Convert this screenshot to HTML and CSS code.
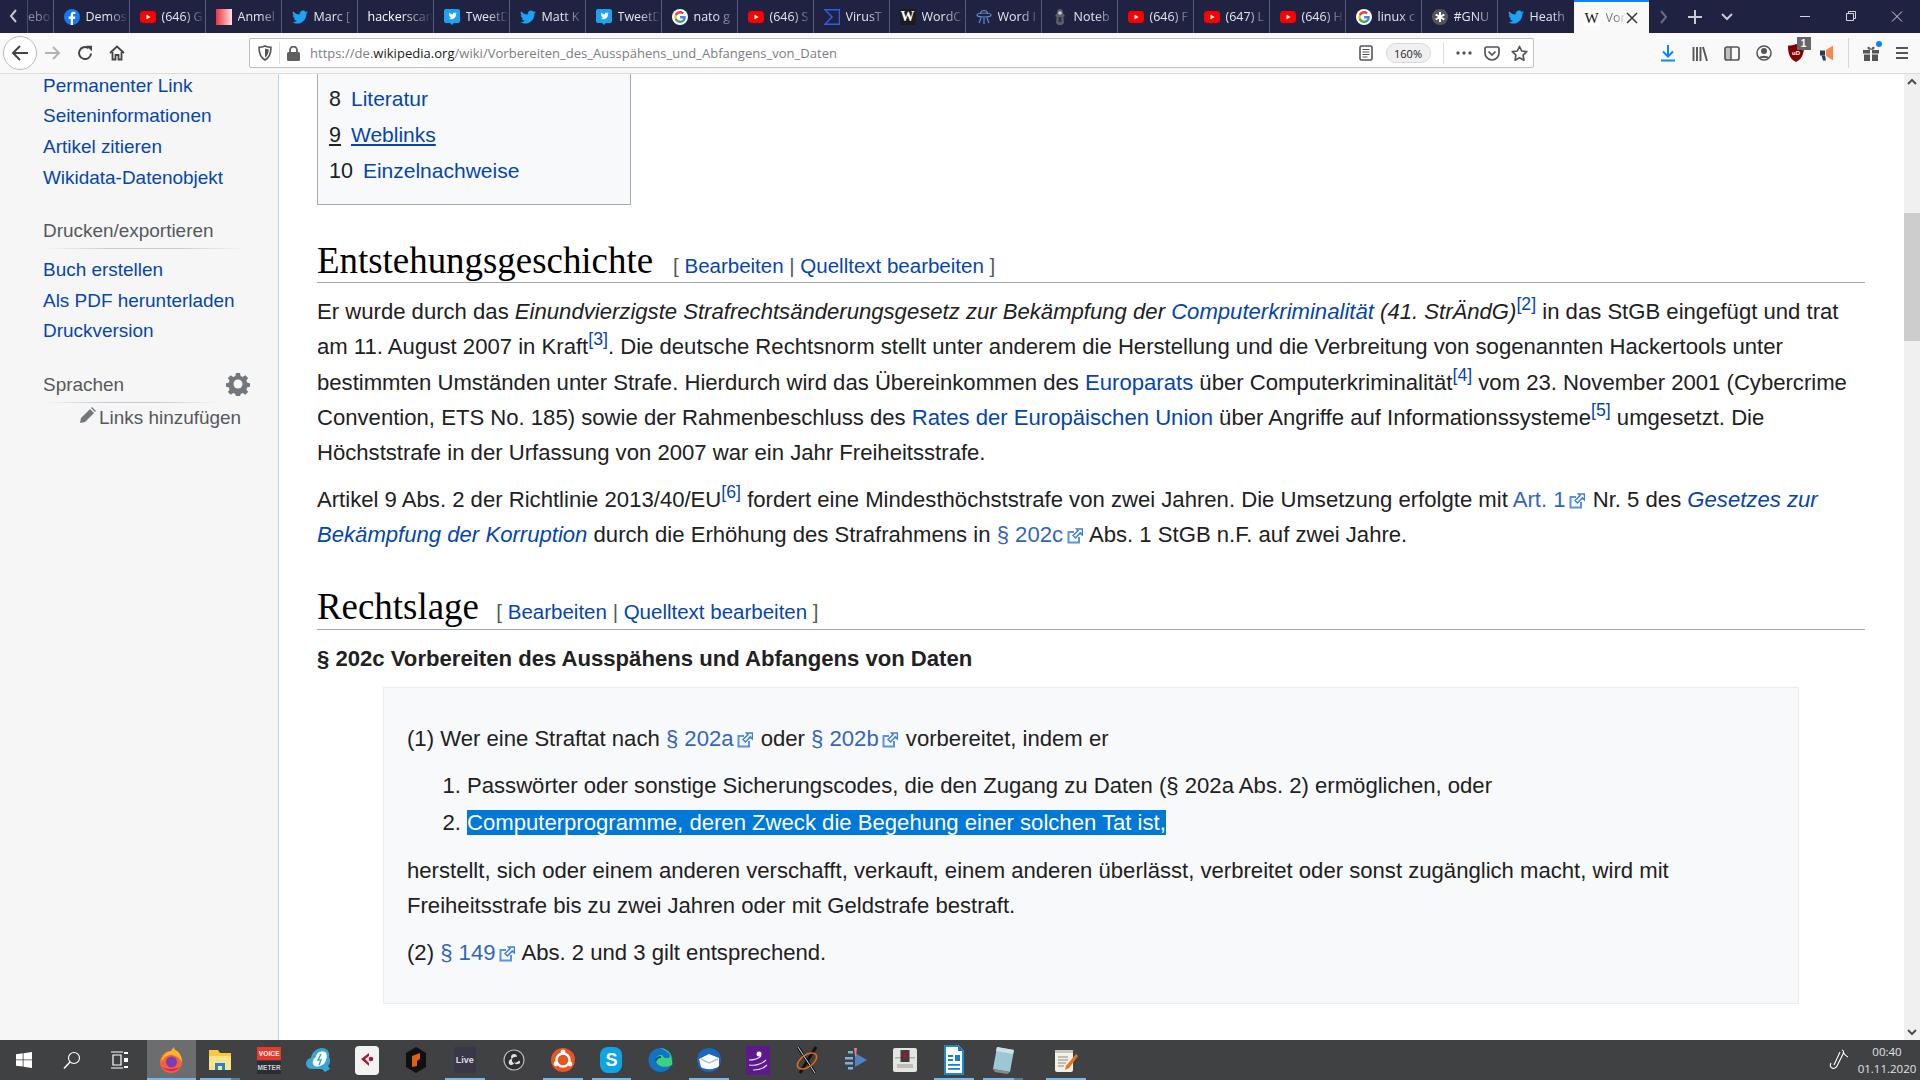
FILE: index.html
```html
<!DOCTYPE html>
<html lang="de">
<head>
<meta charset="utf-8">
<title>Vorbereiten des Ausspähens und Abfangens von Daten</title>
<link rel="stylesheet" href="styles.css">
</head>
<body>
<svg class="defs" width="0" height="0">
  <symbol id="yt" viewBox="0 0 16 16"><rect x="0" y="2" width="16" height="12" rx="3.5" fill="#f00"/><path d="M6.5 5.5v5l4-2.5z" fill="#fff"/></symbol>
  <symbol id="tw" viewBox="0 0 16 16"><path d="M16 3.2c-.6.3-1.2.4-1.9.5.7-.4 1.2-1 1.4-1.8-.6.4-1.3.6-2.1.8C12.800 2 12 1.600 11 1.600c-1.800 0-3.300 1.500-3.300 3.300 0 .3 0 .5.100.7C5.100 5.500 2.700 4.200 1.100 2.200.8 2.700.7 3.200.7 3.800c0 1.100.6 2.100 1.500 2.700-.5 0-1-.2-1.500-.4 0 1.600 1.100 2.900 2.600 3.200-.5.100-1 .2-1.500.100.4 1.300 1.600 2.300 3.100 2.300C3.800 12.700 2 13.300 0 13.100c1.500.9 3.200 1.500 5 1.500 6 0 9.400-5 9.400-9.400v-.4c.6-.5 1.200-1.100 1.600-1.600z" fill="#1da1f2"/></symbol>
  <symbol id="td" viewBox="0 0 16 16"><rect x="0" y="0" width="16" height="14" rx="2" fill="#1da1f2"/><path d="M6 14l2 2 2-2z" fill="#1da1f2"/><path d="M12.500 4.300c-.4.2-.7.300-1.100.3.400-.2.700-.6.800-1-.4.200-.7.400-1.200.4-.7-.7-2.500-.4-2.300 1.400-1.500 0-2.700-.8-3.500-1.800-.5.900 0 1.900.6 2.300-.3 0-.6-.1-.8-.2 0 .9.600 1.600 1.400 1.800-.3.100-.5.100-.8 0 .2.700.9 1.200 1.700 1.300-.7.500-1.500.8-2.500.7 3.500 2 7.100-.4 7.100-4.100.3-.2.500-.5.600-.9z" fill="#fff"/></symbol>
  <symbol id="gg" viewBox="0 0 16 16"><circle cx="8" cy="8" r="8" fill="#fff"/><path d="M13.800 8.200c0-.5 0-.9-.1-1.300H8.100v2.500h3.200c-.1.700-.5 1.300-1.200 1.700v1.500h1.900c1.100-1 1.800-2.600 1.800-4.400z" fill="#4285f4"/><path d="M8.100 14c1.600 0 2.900-.5 3.900-1.400l-1.900-1.500c-.5.400-1.200.6-2 .6-1.500 0-2.800-1-3.300-2.400H2.900v1.500C3.900 12.700 5.800 14 8.100 14z" fill="#34a853"/><path d="M4.800 9.300c-.3-.8-.3-1.700 0-2.500V5.300H2.900c-.8 1.500-.8 3.400 0 5z" fill="#fbbc05"/><path d="M8.100 4.400c.9 0 1.600.3 2.200.9L12 3.600C10.900 2.600 9.600 2 8.100 2 5.800 2 3.900 3.300 2.900 5.300l1.900 1.500c.5-1.400 1.800-2.400 3.300-2.400z" fill="#ea4335"/></symbol>
  <symbol id="ext" viewBox="0 0 16 16"><path d="M7 4H1.500v10.500H12V9" fill="none" stroke="#5b93dc" stroke-width="2"/><path d="M9.500 1H15.500V7L13.300 4.900 8.500 10 6 7.500 11 2.800z" fill="none" stroke="#3f7fd6" stroke-width="1.500"/></symbol>
</svg>

<header class="tabbar">
  <svg class="tabscroll" width="27" height="33" viewBox="0 0 27 33"><path d="M16 10l-5 6 5 6" fill="none" stroke="#c4c5cf" stroke-width="2"/></svg>
  <div class="tab tab-first"><span class="tt">ebo</span></div>
  <div class="tab"><svg class="ti" viewBox="0 0 16 16"><circle cx="8" cy="8" r="8" fill="#1877f2"/><path d="M9 16v-6h2l.4-2.400H9V6.200c0-.8.300-1.200 1.300-1.200h1.100V3c-.5-.1-1.200-.2-1.900-.2C8 2.800 6.700 4 6.700 6v1.600H4.600V10h2.100v6z" fill="#fff"/></svg><span class="tt">Demos</span></div>
  <div class="tab"><svg class="ti"><use href="#yt"/></svg><span class="tt">(646) G</span></div>
  <div class="tab"><span class="ti anmel"></span><span class="tt">Anmel</span></div>
  <div class="tab"><svg class="ti"><use href="#tw"/></svg><span class="tt">Marc [</span></div>
  <div class="tab"><span class="tt tt-wide">hackerscan</span></div>
  <div class="tab"><svg class="ti"><use href="#td"/></svg><span class="tt">TweetD</span></div>
  <div class="tab"><svg class="ti"><use href="#tw"/></svg><span class="tt">Matt K</span></div>
  <div class="tab"><svg class="ti"><use href="#td"/></svg><span class="tt">TweetD</span></div>
  <div class="tab"><svg class="ti"><use href="#gg"/></svg><span class="tt">nato g</span></div>
  <div class="tab"><svg class="ti"><use href="#yt"/></svg><span class="tt">(646) S</span></div>
  <div class="tab"><svg class="ti" viewBox="0 0 16 16"><path d="M1 .8h14.500v14.400H1L8 8z" fill="none" stroke="#2c5ee8" stroke-width="1.500"/></svg><span class="tt">VirusT</span></div>
  <div class="tab"><span class="ti wcell">W</span><span class="tt">WordC</span></div>
  <div class="tab"><svg class="ti" viewBox="0 0 16 16"><g fill="none" stroke="#5f8fc6" stroke-width="1.200"><ellipse cx="8" cy="6" rx="7" ry="2"/><path d="M4.500 5a3.500 3.500 0 0 1 7 0M5 9l-2 5M8 9v6M11 9l2 5"/></g></svg><span class="tt">Word I</span></div>
  <div class="tab"><svg class="ti" viewBox="0 0 16 16"><path d="M8 0c2.500 0 3 2 3 4l2 3-1.500 1 .5 6-2 2H6l-2-2 .5-6L3 7l2-3c0-2 .5-4 3-4z" fill="#5b5f66"/><circle cx="8" cy="4" r="1.800" fill="#c9ccd1"/><rect x="6.500" y="8" width="3" height="5" fill="#34373d"/></svg><span class="tt">Noteb</span></div>
  <div class="tab"><svg class="ti"><use href="#yt"/></svg><span class="tt">(646) F</span></div>
  <div class="tab"><svg class="ti"><use href="#yt"/></svg><span class="tt">(647) L</span></div>
  <div class="tab"><svg class="ti"><use href="#yt"/></svg><span class="tt">(646) H</span></div>
  <div class="tab"><svg class="ti"><use href="#gg"/></svg><span class="tt">linux c</span></div>
  <div class="tab"><svg class="ti" viewBox="0 0 16 16"><circle cx="8" cy="8" r="8" fill="#55565c"/><path d="M8 3v10M3.700 5.500l8.600 5M12.300 5.500l-8.600 5" stroke="#fff" stroke-width="2"/></svg><span class="tt">#GNU</span></div>
  <div class="tab tab-nosep"><svg class="ti"><use href="#tw"/></svg><span class="tt">Heath</span></div>
  <div class="tab tab-active"><span class="ti wlogo">W</span><span class="tt">Vor</span><svg class="tclose" width="12" height="12" viewBox="0 0 12 12"><path d="M1 1l10 10M11 1 1 11" stroke="#3a3a3f" stroke-width="1.600"/></svg></div>
  <div class="tabctl">
    <svg width="30" height="33" viewBox="0 0 30 33"><path d="M12 11l5 6-5 6" fill="none" stroke="#6a6c7a" stroke-width="2"/></svg>
    <svg width="32" height="33" viewBox="0 0 32 33"><path d="M16 10v14M9 17h14" stroke="#c9cad3" stroke-width="2"/></svg>
    <svg width="32" height="33" viewBox="0 0 32 33"><path d="M11 14l5 5 5-5" fill="none" stroke="#c9cad3" stroke-width="2"/></svg>
  </div>
  <div class="winctl">
    <svg width="46" height="33" viewBox="0 0 46 33"><path d="M18 16.500h10" stroke="#d5d6dd"/></svg>
    <svg width="46" height="33" viewBox="0 0 46 33"><path d="M18.500 13.500h7v7h-7zM20.500 13.500v-2h7v7h-2" fill="none" stroke="#d5d6dd"/></svg>
    <svg width="46" height="33" viewBox="0 0 46 33"><path d="M18 11.500l10 10M28 11.500l-10 10" stroke="#d5d6dd"/></svg>
  </div>
</header>

<nav class="toolbar">
  <span class="backbtn"><svg width="18" height="18" viewBox="0 0 18 18"><path d="M17 9H2M9 2 2 9l7 7" fill="none" stroke="#444" stroke-width="2"/></svg></span>
  <svg class="tbi fwd" width="16" height="16" viewBox="0 0 16 16"><path d="M0 8h14M8 2l6 6-6 6" fill="none" stroke="#b3b3b3" stroke-width="2"/></svg>
  <svg class="tbi reload" width="16" height="16" viewBox="0 0 16 16"><path d="M14 8.500A6 6 0 1 1 11.500 3.200" fill="none" stroke="#444" stroke-width="2"/><path d="M9 .8h6v5.500z" fill="#444"/></svg>
  <svg class="tbi home" width="16" height="16" viewBox="0 0 16 16"><path d="M1 8l7-6.500L15 8M3.500 7v7.500h3V10h3v4.500h3V7" fill="none" stroke="#444" stroke-width="1.800"/></svg>
  <div class="urlbar">
    <svg class="shield" width="14" height="16" viewBox="0 0 14 16"><path d="M7 1c2 1 4 1.300 6 1.300 0 6-1 10-6 12.700C2 12.300 1 8.300 1 2.300 3 2.300 5 2 7 1z" fill="none" stroke="#555" stroke-width="1.600"/><path d="M7 3.500v9c2.800-2 3.600-4.800 3.700-8.300C9.500 4.100 8.200 4 7 3.500z" fill="#555"/></svg>
    <span class="urlsep"></span>
    <svg class="lock" width="13" height="15" viewBox="0 0 13 15"><rect x="0" y="6" width="13" height="9" rx="1.500" fill="#5f5f5f"/><path d="M3 6.500V4a3.500 3.500 0 0 1 7 0v2.500" fill="none" stroke="#5f5f5f" stroke-width="1.800"/></svg>
    <span class="url">https://de.<b>wikipedia.org</b>/wiki/Vorbereiten_des_Ausspähens_und_Abfangens_von_Daten</span>
    <svg class="reader" width="14" height="16" viewBox="0 0 14 16"><rect x="1" y="1" width="12" height="14" rx="1.500" fill="none" stroke="#555" stroke-width="1.600"/><path d="M3.500 4.500h7M3.500 7h7M3.500 9.500h7M3.500 12h5" stroke="#555"/></svg>
    <span class="zoompill">160%</span>
    <span class="urlsep urlsep-r"></span>
    <svg class="dots" width="16" height="4" viewBox="0 0 16 4"><circle cx="2" cy="2" r="1.700" fill="#555"/><circle cx="8" cy="2" r="1.700" fill="#555"/><circle cx="14" cy="2" r="1.700" fill="#555"/></svg>
    <svg class="pocket" width="16" height="15" viewBox="0 0 16 15"><path d="M1 2.500a1.500 1.500 0 0 1 1.500-1.500h11A1.500 1.500 0 0 1 15 2.500V7a7 7 0 0 1-14 0z" fill="none" stroke="#555" stroke-width="1.700"/><path d="M4.500 5.500 8 9l3.500-3.500" fill="none" stroke="#555" stroke-width="1.700"/></svg>
    <svg class="star" width="17" height="16" viewBox="0 0 17 16"><path d="M8.500 1.500l2.200 4.500 5 .7-3.600 3.500.8 5-4.400-2.400-4.400 2.400.8-5L1.300 6.700l5-.7z" fill="none" stroke="#555" stroke-width="1.700" stroke-linejoin="round"/></svg>
  </div>
  <div class="tbright">
    <svg width="16" height="17" viewBox="0 0 16 17"><path d="M8 0v11M3 6.500l5 5 5-5" fill="none" stroke="#0a84ff" stroke-width="2"/><path d="M1 15.500h14" stroke="#0a84ff" stroke-width="2"/></svg>
    <svg width="16" height="15" viewBox="0 0 16 15"><path d="M1.500 1v14M5 1v14M8.500 1v14M11 1l4 14" fill="none" stroke="#555" stroke-width="1.900"/></svg>
    <svg width="16" height="15" viewBox="0 0 16 15"><rect x="1" y="1" width="14" height="13" rx="2" fill="none" stroke="#555" stroke-width="1.700"/><rect x="1" y="1" width="6" height="13" fill="#555" opacity=".35"/><path d="M7 1v13" stroke="#555" stroke-width="1.500"/></svg>
    <svg width="16" height="16" viewBox="0 0 16 16"><circle cx="8" cy="8" r="7" fill="none" stroke="#555" stroke-width="1.500"/><circle cx="8" cy="6" r="3" fill="#555"/><path d="M3 13c1-3 9-3 10 0" fill="#555"/></svg>
    <span class="ublock"><svg width="16" height="18" viewBox="0 0 16 18"><path d="M8 0c2.500 1.200 5 1.600 8 1.600 0 7-1 13-8 16.400C1 14.600 0 8.600 0 1.600 3 1.600 5.500 1.200 8 0z" fill="#800000"/><text x="8" y="11" class="ubt">uD</text></svg><span class="ubadge">1</span></span>
    <svg width="18" height="16" viewBox="0 0 18 16"><path d="M0 5.500h5v5H0z" fill="#2e3c52"/><path d="M1.500 10.500h3.500l1 5H3z" fill="#2e3c52"/><path d="M6 5l7-4.500v15L6 11z" fill="#f9884d"/></svg>
    <span class="tbdiv"></span>
    <span class="gift"><svg width="16" height="15" viewBox="0 0 16 15"><path d="M0 4h7v3.500H0zM9 4h7v3.500H9zM1 8.500h6V15H1zM9 8.500h6V15H9z" fill="#555"/><path d="M8 4C6 4 4 3 4.500 1.500S7.500 1 8 4c.5-3 3-4 3.500-2.500S10 4 8 4z" fill="#555"/></svg><i class="giftdot"></i></span>
    <svg width="14" height="14" viewBox="0 0 14 14"><path d="M1 2h12M1 7h12M1 12h12" stroke="#555" stroke-width="2"/></svg>
  </div>
</nav>

<main class="viewport">
  <aside class="sidebar">
    <ul class="sidelist sidelist-top">
      <li>Permanenter Link</li>
      <li>Seiteninformationen</li>
      <li>Artikel zitieren</li>
      <li>Wikidata-Datenobjekt</li>
    </ul>
    <h3 class="sidehead">Drucken/exportieren</h3>
    <ul class="sidelist">
      <li>Buch erstellen</li>
      <li>Als PDF herunterladen</li>
      <li>Druckversion</li>
    </ul>
    <div class="langhead">
      <h3 class="sidehead sidehead-lang">Sprachen</h3>
      <svg class="gear" width="24" height="24" viewBox="0 0 24 24"><path d="M10 1h4l.6 3 2.100.9 2.600-1.700 2.800 2.800-1.700 2.600.9 2.100 3 .6v3.400l-3 .6-.9 2.100 1.700 2.600-2.800 2.800-2.600-1.700-2.100.9-.6 3h-4l-.6-3-2.100-.9-2.600 1.700-2.800-2.800 1.700-2.600-.9-2.100-3-.6v-3.400l3-.6.9-2.100-1.700-2.600 2.800-2.800 2.600 1.700 2.100-.9z" fill="#72777d"/><circle cx="12" cy="12" r="4.500" fill="#f6f6f6"/></svg>
    </div>
    <div class="addlinks"><svg width="16" height="16" viewBox="0 0 16 16"><path d="M0 16l1-5L10 2l4 4-9 9zM11 1l1-1 4 4-1 1z" fill="#72777d"/></svg><span>Links hinzufügen</span></div>
  </aside>

  <article class="content">
    <div class="toc">
      <div class="tocitem"><span class="tocnum">8</span><a class="lnk">Literatur</a></div>
      <div class="tocitem"><span class="tocnum u">9</span><a class="lnk u">Weblinks</a></div>
      <div class="tocitem"><span class="tocnum">10</span><a class="lnk">Einzelnachweise</a></div>
    </div>

    <h2 class="h2 h2-first"><span class="h2t">Entstehungsgeschichte</span><span class="edit">[ <a class="lnk">Bearbeiten</a> | <a class="lnk">Quelltext bearbeiten</a> ]</span></h2>
    <p class="p">Er wurde durch das <i>Einundvierzigste Strafrechtsänderungsgesetz zur Bekämpfung der <a class="lnk">Computerkriminalität</a> (41. StrÄndG)</i><sup class="lnk">[2]</sup> in das StGB eingefügt und trat am 11. August 2007 in Kraft<sup class="lnk">[3]</sup>. Die deutsche Rechtsnorm stellt unter anderem die Herstellung und die Verbreitung von sogenannten Hackertools unter bestimmten Umständen unter Strafe. Hierdurch wird das Übereinkommen des <a class="lnk">Europarats</a> über Computerkriminalität<sup class="lnk">[4]</sup> vom 23. November 2001 (Cybercrime Convention, ETS No. 185) sowie der Rahmenbeschluss des <a class="lnk">Rates der Europäischen Union</a> über Angriffe auf Informationssysteme<sup class="lnk">[5]</sup> umgesetzt. Die Höchststrafe in der Urfassung von 2007 war ein Jahr Freiheitsstrafe.</p>
    <p class="p">Artikel 9 Abs. 2 der Richtlinie 2013/40/EU<sup class="lnk">[6]</sup> fordert eine Mindesthöchststrafe von zwei Jahren. Die Umsetzung erfolgte mit <a class="xlnk">Art. 1<svg class="exti"><use href="#ext"/></svg></a> Nr. 5 des <i><a class="lnk">Gesetzes zur Bekämpfung der Korruption</a></i> durch die Erhöhung des Strafrahmens in <a class="xlnk">§ 202c<svg class="exti"><use href="#ext"/></svg></a> Abs. 1 StGB n.F. auf zwei Jahre.</p>

    <h2 class="h2 h2-second"><span class="h2t">Rechtslage</span><span class="edit">[ <a class="lnk">Bearbeiten</a> | <a class="lnk">Quelltext bearbeiten</a> ]</span></h2>
    <p class="p p-bold"><b>§ 202c Vorbereiten des Ausspähens und Abfangens von Daten</b></p>

    <blockquote class="quote">
      <p class="qp">(1) Wer eine Straftat nach <a class="xlnk">§ 202a<svg class="exti"><use href="#ext"/></svg></a> oder <a class="xlnk">§ 202b<svg class="exti"><use href="#ext"/></svg></a> vorbereitet, indem er</p>
      <ol class="ol">
        <li>Passwörter oder sonstige Sicherungscodes, die den Zugang zu Daten (§ 202a Abs. 2) ermöglichen, oder</li>
        <li><span class="sel">Computerprogramme, deren Zweck die Begehung einer solchen Tat ist,</span></li>
      </ol>
      <p class="qp">herstellt, sich oder einem anderen verschafft, verkauft, einem anderen überlässt, verbreitet oder sonst zugänglich macht, wird mit Freiheitsstrafe bis zu zwei Jahren oder mit Geldstrafe bestraft.</p>
      <p class="qp">(2) <a class="xlnk">§ 149<svg class="exti"><use href="#ext"/></svg></a> Abs. 2 und 3 gilt entsprechend.</p>
    </blockquote>
  </article>

  <div class="scrollbar">
    <svg class="sbarrow" width="16" height="16" viewBox="0 0 16 16"><path d="M4 10l4-4 4 4" fill="none" stroke="#505050" stroke-width="2"/></svg>
    <div class="sbspace"></div>
    <div class="sbthumb"></div>
    <div class="sbrest"></div>
    <svg class="sbarrow" width="16" height="16" viewBox="0 0 16 16"><path d="M4 6l4 4 4-4" fill="none" stroke="#505050" stroke-width="2"/></svg>
  </div>
</main>

<footer class="taskbar">
  <div class="tslot tslot-sys"><svg width="16" height="16" viewBox="0 0 16 16"><path d="M0 2.300l6.700-1v6.200H0zM7.500 1.200 16 0v7.500H7.500zM0 8.300h6.700v6.300L0 13.700zM7.500 8.300H16V16l-8.500-1.200z" fill="#fff"/></svg></div>
  <div class="tslot tslot-sys"><svg width="18" height="18" viewBox="0 0 18 18"><circle cx="11" cy="7" r="5.500" fill="none" stroke="#fff" stroke-width="1.200"/><path d="M7 11l-6 6.500" stroke="#fff" stroke-width="1.500"/></svg></div>
  <div class="tslot tslot-view"><svg width="18" height="18" viewBox="0 0 18 18"><path d="M0 1h12M0 17h12M2 4h8v10H2z" fill="none" stroke="#fff" stroke-width="1.200"/><path d="M13 1h4v2h-4zM13 7h4v4h-4zM13 15h4v2h-4z" fill="#fff"/></svg></div>

  <div class="tslot tslot-active run-full"><svg width="26" height="26" viewBox="0 0 26 26"><circle cx="13" cy="15" r="11" fill="#f2643a"/><path d="M3 15C4 8 9 4 13 4c1-2 2-3 3-4 0 2 1 3 3 4 3 2 5 6 5 11-3-5-7-7-11-7-4 0-7 3-10 7z" fill="#ffb325"/><circle cx="13.500" cy="15" r="5.500" fill="#7c3bb8"/><path d="M4 20c4 5 13 6 18 0-4 2-13 3-18 0z" fill="#e3225a"/></svg></div>
  <div class="tslot run-stack"><svg width="24" height="22" viewBox="0 0 24 22"><path d="M1 1h9l2 3h11v17H1z" fill="#f7c844"/><path d="M1 7h22v14H1z" fill="#fde48b"/><path d="M7 21v-7h10v7h-3v-4h-4v4z" fill="#1f86d6"/></svg></div>
  <div class="tslot"><div class="vm"><span class="vm1">VOICE</span><span class="vm2">METER</span></div></div>
  <div class="tslot"><svg width="25" height="26" viewBox="0 0 25 26"><path d="M6 22a5.500 5.500 0 0 1-1-11C6 4 12 1 16 1c5 0 8 4 7 9 2 3 1 7-1 9l2 3-5 3-3-3z" fill="#37a6d6"/><path d="M10 10c0-5 7-7 10-4 2 3 0 8-2 11l-4 2c-2 1-6 1-7-2s1-6 3-7z" fill="#fff"/><path d="M15 7l-3 6h3l-2 5" fill="none" stroke="#37a6d6" stroke-width="1.500"/></svg></div>
  <div class="tslot"><svg width="24" height="29" viewBox="0 0 24 29"><rect width="24" height="29" rx="4" fill="#f2f2f2"/><path d="M14 7l-8 6 8 7v-3l-4-4 4-3z" fill="#a6192e"/><circle cx="16" cy="13" r="2.300" fill="#a6192e"/></svg></div>
  <div class="tslot"><svg width="20" height="26" viewBox="0 0 20 26"><path d="M10 0l10 6v14l-10 6L0 20V6z" fill="#101010"/><path d="M6 9l8-3v6l-3 2v5l-5 1z" fill="#e25c1c"/></svg></div>
  <div class="tslot run-bar"><span class="liveicon">Live</span></div>
  <div class="tslot"><svg width="22" height="22" viewBox="0 0 22 22"><circle cx="11" cy="11" r="10" fill="#2e2e33" stroke="#bdbdbd" stroke-width="1.200"/><path d="M11 5a3 3 0 0 1 3 3c-2-.5-4 .3-5 2-2-2-.5-5 2-5zM6 15c-1-3 1-5 3-5.500-.5 2 .3 4 2 5-2 2-4 2-5 .5zM16.500 14.500c-2 1.500-4.500.8-5.500-1 2 .5 4-.5 5-2 1.500 1 1.500 2 .5 3z" fill="#e0e0e0"/></svg></div>
  <div class="tslot run-bar"><svg width="24" height="24" viewBox="0 0 24 24"><circle cx="12" cy="12" r="12" fill="#e95420"/><circle cx="12" cy="12" r="6.500" fill="none" stroke="#fff" stroke-width="2.500"/><circle cx="12" cy="4" r="2.400" fill="#fff"/><circle cx="5" cy="16" r="2.400" fill="#fff"/><circle cx="19" cy="16" r="2.400" fill="#fff"/></svg></div>
  <div class="tslot run-bar"><span class="skype">S</span></div>
  <div class="tslot"><svg width="25" height="26" viewBox="0 0 25 26"><circle cx="12.500" cy="13" r="12" fill="#1173c4"/><path d="M24 14C24 6 18 1 12 1c5 2 10 5 10 8 0 3-6 3-7 0-1-2-7-1-7 4 0 6 8 9 16 5 1-1 0-2 0-4z" fill="#3dd07e"/><path d="M8 14c0-3 3-4 5-4" fill="none" stroke="#0c4f8b" stroke-width="2"/></svg></div>
  <div class="tslot run-bar"><svg width="24" height="26" viewBox="0 0 24 26"><circle cx="12" cy="13" r="12" fill="#1a66c4"/><path d="M2 12l10-5 10 4v8c-4 4-14 4-18 1z" fill="#fff"/><path d="M4 12l8 4 9-4" fill="none" stroke="#b5c3d4" stroke-width="1.500"/></svg></div>
  <div class="tslot"><svg width="24" height="29" viewBox="0 0 24 29"><rect width="24" height="29" fill="#5e1a8a"/><circle cx="13" cy="8" r="2.500" fill="#fff"/><path d="M3 14c5 0 10-2 12-4M3 19c6 1 13-1 17-5M7 24c5 0 10-1 14-5" fill="none" stroke="#e6d8f0" stroke-width="1.100"/></svg></div>
  <div class="tslot"><svg width="24" height="28" viewBox="0 0 24 28"><path d="M3 1l17 26M21 1 5 27" stroke="#111" stroke-width="3"/><path d="M3 1l17 26" stroke="#ddd" stroke-width="1"/><ellipse cx="12" cy="15" rx="11" ry="6" fill="none" stroke="#e06a14" stroke-width="1.600" transform="rotate(-35 12 15)"/></svg></div>
  <div class="tslot"><svg width="24" height="24" viewBox="0 0 24 24"><path d="M11 5l12 7-12 7z" fill="#4f83c2"/><path d="M1 9h8v2.500H1zM1 14h8v2.500H1zM4 3h5v2.500H4zM4 19h5v2.500H4z" fill="#7cb2e8"/><path d="M10 0h3l-1 8h-1z" fill="#e58080"/></svg></div>
  <div class="tslot"><svg width="24" height="26" viewBox="0 0 24 26"><rect y="1" width="24" height="24" rx="2" fill="#e4e4e0"/><rect x="2" y="10" width="20" height="1.500" fill="#b0b0ac"/><rect x="7.500" y="3" width="9" height="12" fill="#3e3e3e"/><rect x="10.500" y="6" width="3" height="5" fill="#b11"/><rect x="4" y="17" width="16" height="4" fill="#bdbdb9"/></svg></div>
  <div class="tslot run-bar"><svg width="20" height="30" viewBox="0 0 20 30"><path d="M0 0h14l6 6v24H0z" fill="#fff"/><path d="M14 0l6 6h-6z" fill="#1576c9"/><path d="M0 0h14v2H2v26h16V6h2v24H0z" fill="#1a8ad7"/><path d="M4 10h5v2H4zM4 14h5v2H4zM11 10h5v6h-5zM4 19h12v1.800H4zM4 23h12v1.800H4z" fill="#1a7fc9"/></svg></div>
  <div class="tslot run-stack"><svg width="22" height="28" viewBox="0 0 22 28"><path d="M5 1l17 3-4 22-17-3z" fill="#9bc8d4"/><path d="M5 1l17 3-1 4-17-3z" fill="#cde0e6"/><path d="M1 23l17 3-3 2-12-2z" fill="#8c8c86"/></svg></div>
  <div class="tslot tslot-last run-bar"><svg width="24" height="26" viewBox="0 0 24 26"><rect x="1" y="3" width="18" height="22" rx="2" fill="#f3f0e4"/><path d="M1 3h18v3H1z" fill="#c9c6ba"/><path d="M4 10h10M4 13h10M4 16h8M4 19h6" stroke="#8d8b80"/><path d="M22 7l2 2-9 12-4 2 1-4z" fill="#e8731e"/></svg></div>

  <div class="tray">
    <svg width="20" height="22" viewBox="0 0 20 22"><path d="M13 1c2 1 2 2 1 4l-6 12c-1 2-3 3-5 2s-2-3-1-5M11 3l-6 13M14 3c1 2 3 4 5 5" fill="none" stroke="#fff" stroke-width="1.100"/></svg>
    <div class="clock"><span>00:40</span><span>01.11.2020</span></div>
  </div>
</footer>
</body>
</html>
```

FILE: styles.css
```css
* { box-sizing: border-box; }
html, body { margin: 0; padding: 0; width: 1920px; height: 1080px; overflow: hidden; background: #fff; }
body { display: flex; flex-direction: column; font-family: "Liberation Sans", Arial, sans-serif; color: #202122; }
.defs { position: absolute; }

/* tab strip */
.tabbar { height: 33px; flex: none; display: flex; background: #1f2240; color: #e6e6ec; }
.tabscroll { flex: none; }
.tab { width: 76px; flex: none; display: flex; align-items: center; padding-left: 10px; border-right: 1px solid #5a5d77; height: 33px; overflow: hidden; font: 12.500px "Open Sans", "Liberation Sans", sans-serif; }
.tab-first { width: 26.500px; padding-left: 0; border-left: 1px solid #4a4d66; color: #8a8c9c; }
.tab-nosep { border-right: none; }
.ti { width: 16px; height: 16px; flex: none; margin-right: 6px; }
.tt { white-space: nowrap; overflow: hidden; flex: 1; -webkit-mask-image: linear-gradient(to right, #000 50%, transparent 100%); mask-image: linear-gradient(to right, #000 50%, transparent 100%); }
.tt-wide { color: #fff; }
.anmel { background: linear-gradient(to right, #f0303a, #ffe0e0); }
.wcell { background: #1c1c1c; color: #fff; font: bold 14px "Liberation Serif", serif; text-align: center; line-height: 16px; }
.wlogo { background: #fff; color: #111; font: 15px "Liberation Serif", serif; text-align: center; line-height: 16px; }
.tab-active { width: 75px; background: #f9f9fa; color: #77777a; border-top: 2px solid #0a84ff; border-right: none; padding-right: 11px; }
.tclose { flex: none; }
.tabctl { display: flex; }
.winctl { display: flex; margin-left: auto; }

/* nav toolbar */
.toolbar { height: 41px; flex: none; display: flex; align-items: center; background: #f9f9fa; border-bottom: 1px solid #dcdcde; padding-left: 3px; }
.backbtn { width: 34px; height: 34px; border: 1px solid #bbb; border-radius: 50%; background: #fff; display: flex; align-items: center; justify-content: center; flex: none; }
.tbi { flex: none; }
.fwd { margin-left: 8px; }
.reload { margin-left: 16px; }
.home { margin-left: 16px; }
.urlbar { margin-left: 124px; width: 1285px; height: 30px; background: #fff; border: 1px solid #c0c0c2; border-radius: 2px; display: flex; align-items: center; padding-left: 8px; flex: none; }
.shield { flex: none; }
.urlsep { width: 1px; height: 22px; background: #dedee0; margin-left: 7px; flex: none; }
.lock { margin-left: 7px; flex: none; }
.url { margin-left: 10px; font: 13px "Open Sans", "Liberation Sans", sans-serif; color: #7d7d82; white-space: nowrap; letter-spacing: .03px; flex: 1; }
.url b { font-weight: 400; color: #18181c; }
.reader { flex: none; }
.zoompill { margin-left: 13px; width: 45px; height: 20px; border-radius: 10px; border: 1px solid #d8d8da; background: #f0f0f2; font: 11px "Open Sans", "Liberation Sans", sans-serif; color: #222; display: flex; align-items: center; justify-content: center; flex: none; }
.urlsep-r { margin-left: 12px; }
.dots { margin-left: 12px; flex: none; }
.pocket { margin-left: 12.500px; flex: none; }
.star { margin-left: 11px; margin-right: 5px; flex: none; }
.tbright { display: flex; align-items: center; margin-left: 125.500px; gap: 16px; }
.ublock { position: relative; display: flex; }
.ubt { font: bold 6px "Liberation Sans", sans-serif; fill: #fff; text-anchor: middle; }
.ubadge { position: absolute; top: -7px; left: 9px; width: 14px; height: 13px; background: #666; color: #fff; font: bold 10px "Liberation Sans", sans-serif; text-align: center; line-height: 13px; }
.tbdiv { width: 1px; height: 30px; background: #d8d8da; margin: 0 0 0 -6px; }
.gift { position: relative; display: flex; margin-left: -2px; }
.giftdot { position: absolute; top: -5px; right: -3px; width: 6px; height: 6px; border-radius: 50%; background: #0a84ff; }

/* page */
.viewport { flex: 1; min-height: 0; display: flex; overflow: hidden; background: #fff; }
.sidebar { width: 279px; flex: none; background: #f6f6f6; border-right: 1px solid #a7d7f9; padding: 0 0 0 43px; font-size: 18.950px; }
.sidelist { list-style: none; margin: 0; padding: 0; }
.sidelist li { height: 30.700px; line-height: 30.700px; color: #0645ad; white-space: nowrap; }
.sidelist-top { margin-top: -3.500px; }
.sidehead { margin: 22.700px 0 6px; width: 204px; font-weight: 400; font-size: 18.950px; line-height: 30px; height: 33px; color: #54595d; background: linear-gradient(to right, rgba(200,204,209,0), #c8ccd1 33%, #c8ccd1 66%, rgba(200,204,209,0)) bottom / 100% 1px no-repeat; }
.sidelist + .langhead { margin-top: 22.600px; }
.langhead { display: flex; align-items: flex-start; width: 208px; }
.sidehead-lang { margin: 0; width: 176px; flex: none; }
.gear { margin-left: 7px; margin-top: 2.400px; flex: none; }
.addlinks { display: flex; align-items: flex-start; gap: 3px; margin: .6px 0 0 37px; color: #54595d; line-height: 30px; white-space: nowrap; }
.addlinks svg { margin-top: 4px; }

.content { flex: 1; min-width: 0; padding: 0 39px 0 38px; font-size: 22.120px; line-height: 35.200px; }
.lnk { color: #0645ad; }
.xlnk { color: #36b; }
.u { text-decoration: underline; }
.toc { width: 314px; height: 131px; background: #f8f9fa; border: 1px solid #a2a9b1; border-top: none; padding: 7px 0 0 11px; font-size: 21px; }
.tocitem { height: 36px; line-height: 36px; white-space: nowrap; }
.tocnum { margin-right: 10px; color: #202122; font-size: 21.500px; }
.h2 { margin: 0; display: flex; align-items: baseline; border-bottom: 1px solid #a2a9b1; font-weight: 400; height: 62.600px; padding-top: 19px; white-space: nowrap; }
.h2-first { margin-top: 15px; }
.h2-second { height: 65.600px; padding-top: 21px; }
.h2t { font: 36.900px/1.2 "Liberation Serif", serif; color: #000; }
.edit { font-size: 20.500px; margin-left: 20px; color: #54595d; }
.h2-second .edit { margin-left: 17.500px; }
.p { margin: 11.700px 0 11.800px; }
sup { font-size: 17.700px; line-height: 1; vertical-align: baseline; position: relative; top: -9px; }
.exti { width: 16px; height: 16px; margin: 0 1.500px 0 3.500px; vertical-align: -2px; }
.p-bold { margin-top: 10.800px; margin-bottom: 0; }
.quote { margin: 10.800px 70px 0 66px; width: 1416px; height: 317.200px; background: #f8f9fa; border: 1px solid #eaecf0; padding: 33px 22px 0 23px; }
.qp { margin: 0 0 12px; }
.ol { margin: 10.200px 0 12px; padding-left: 60px; }
.ol li { margin-bottom: 2.400px; }
.sel { background: #0078d7; color: #fff; }

/* scrollbar */
.scrollbar { width: 16px; flex: none; background: #f0f0f0; display: flex; flex-direction: column; }
.sbarrow { flex: none; }
.sbspace { height: 123px; flex: none; }
.sbthumb { height: 128px; flex: none; background: #cdcdcd; }
.sbrest { flex: 1; }

/* taskbar */
.taskbar { height: 40px; flex: none; background: #3f4142; display: flex; align-items: center; color: #e6e6e6; }
.tslot { width: 48.900px; height: 40px; flex: none; display: flex; align-items: center; justify-content: center; position: relative; }
.tslot-sys { width: 48px; }
.tslot-view { width: 51px; padding-right: 3px; }
.tslot-active { background: #6b6d6e; }
.tslot-last { margin-left: 14.600px; }
.run-full::after, .run-bar::after, .run-stack::after { content: ""; position: absolute; bottom: 0; height: 2px; background: #76b9ed; }
.run-full::after { left: 0; right: 0; }
.run-bar::after { left: 4.500px; right: 4.500px; }
.run-stack::after { left: 4.500px; right: 4.500px; background: linear-gradient(to right, #76b9ed 78%, #4f7ea3 78%); }
.vm { width: 24px; display: flex; flex-direction: column; font: bold 6.500px/1 "Liberation Sans", sans-serif; text-align: center; letter-spacing: .1px; }
.vm1 { background: #e8392a; color: #fff; height: 13px; line-height: 13px; }
.vm2 { background: #2a2d33; color: #cfd3d8; height: 13px; line-height: 13px; margin-top: 1px; }
.liveicon { width: 22px; height: 26px; background: #3a3848; color: #ddd; font: bold 9px/26px "Liberation Sans", sans-serif; text-align: center; }
.skype { width: 22px; height: 26px; background: #0ea5e4; border-radius: 8px; color: #fff; font: bold 18px/26px "Liberation Sans", sans-serif; text-align: center; }
.tray { margin-left: auto; display: flex; align-items: center; gap: 9.500px; padding-right: 4px; }
.clock { display: flex; flex-direction: column; align-items: center; font: 11.500px/17px "Open Sans", "Liberation Sans", sans-serif; color: #e2e2e2; width: 58px; }
```
